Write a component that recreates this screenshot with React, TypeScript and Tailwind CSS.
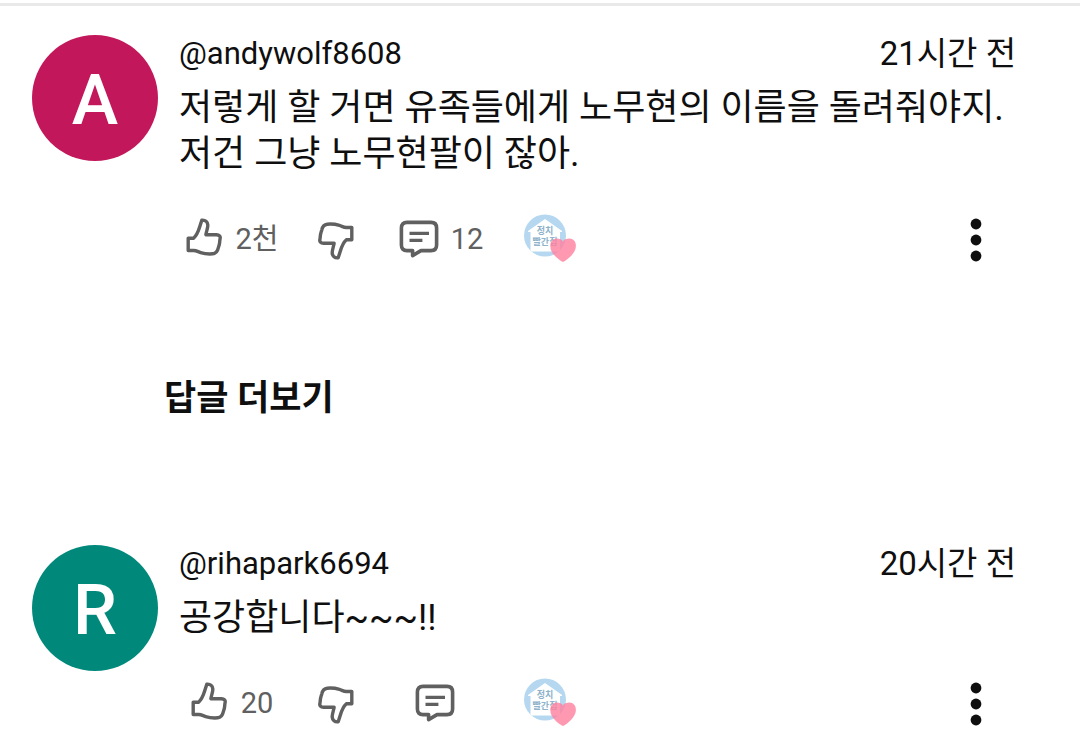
import type { ReactNode } from "react";
import clsx from "clsx";

type Comment = {
  handle: string;
  time: string;
  text: string;
  initial: string;
  avatarClass: string;
  likes: string;
  replies?: string;
};

const comments: Comment[] = [
  {
    handle: "@andywolf8608",
    time: "21시간 전",
    text: "저렇게 할 거면 유족들에게 노무현의 이름을 돌려줘야지. 저건 그냥 노무현팔이 잖아.",
    initial: "A",
    avatarClass: "bg-[#c2185b]",
    likes: "2천",
    replies: "12",
  },
  {
    handle: "@rihapark6694",
    time: "20시간 전",
    text: "공강합니다~~~!!",
    initial: "R",
    avatarClass: "bg-[#00897b]",
    likes: "20",
  },
];

function ThumbIcon({ className }: { className?: string }) {
  return (
    <svg
      viewBox="0 0 36 38"
      aria-hidden
      className={clsx("h-[38px] w-9 flex-none", className)}
      fill="none"
      stroke="currentColor"
      strokeWidth="3.4"
      strokeLinejoin="round"
    >
      <path d="M2.2 20.2H7.6C10.8 17.4 12.6 12.6 13.8 8.6L15.8 2.2C19.4 1.8 21.6 3.9 21.8 6.8C22 10 20.3 13.4 19.9 16.7H30.4C33.4 16.7 34.6 18.4 34.1 20.6C33.7 22.4 33.8 23.6 33.5 25.4C33.2 27.4 32.7 28.2 32.2 30.2C31.4 34 29.8 35.5 26.8 35.8C22.4 36.2 18.2 35.7 14.6 34.6C11.8 33.7 10.4 32.5 7.6 32.5H2.2Z" />
    </svg>
  );
}

function CommentIcon() {
  return (
    <svg
      viewBox="0 0 40 38"
      aria-hidden
      className="h-[38px] w-10 flex-none"
      fill="none"
      stroke="currentColor"
      strokeWidth="3.6"
      strokeLinejoin="round"
    >
      <path d="M8 2.4H32C35.8 2.4 37.6 4.2 37.6 8V25C37.6 28.8 35.8 30.6 32 30.6H22L13.6 35.6V30.6H8C4.2 30.6 2.4 28.8 2.4 25V8C2.4 4.2 4.2 2.4 8 2.4Z" />
      <path d="M10.5 13.4H30M10.5 20.4H23.4" strokeWidth="3.4" />
    </svg>
  );
}

function MoreIcon() {
  return (
    <svg viewBox="0 0 12 44" aria-hidden className="h-11 w-3 fill-current">
      <circle cx="6" cy="6" r="5.4" />
      <circle cx="6" cy="22" r="5.4" />
      <circle cx="6" cy="38" r="5.4" />
    </svg>
  );
}

function CreatorHeart() {
  return (
    <svg viewBox="0 0 54 50" role="img" aria-label="정치 빨간집" className="h-[50px] w-[54px]">
      <circle cx="22" cy="21.5" r="21" fill="#b5d8f0" />
      <path d="M22 5.5L39 17.5H36.5V37H8V17.5H5Z" fill="#fff" stroke="#fff" strokeLinejoin="round" />
      <g fill="#8fb3cb" fontFamily="Roboto, 'Noto Sans CJK KR', sans-serif" fontWeight="700" textAnchor="middle">
        <text x="22" y="20" fontSize="9">
          정치
        </text>
        <text x="22" y="31" fontSize="9">
          빨간집
        </text>
      </g>
      <path
        d="M40 48C36.5 46.4 27.5 40 27.3 32.4C27.1 27.8 30.1 24.6 33.9 24.6C36.5 24.6 38.9 25.4 40 27.4C41.1 25.4 43.5 24.6 46.3 24.6C50.3 24.6 53.1 27.8 52.9 32.2C52.7 39.6 43.5 46.4 40 48Z"
        fill="#ff7f9f"
        fillOpacity="0.8"
      />
    </svg>
  );
}

function Action({ label, className, children }: { label: string; className?: string; children: ReactNode }) {
  return (
    <button type="button" aria-label={label} className={clsx("flex items-center justify-center", className)}>
      {children}
    </button>
  );
}

function CommentItem({ handle, time, text, initial, avatarClass, likes, replies }: Comment) {
  return (
    <article className="flex gap-[21px] pr-16 pl-8">
      <div
        className={clsx(
          "flex size-[126px] flex-none items-center justify-center rounded-full pt-1 text-[70px] leading-none font-medium text-white",
          avatarClass,
        )}
      >
        {initial}
      </div>

      <div className="min-w-0 flex-1">
        <header className="flex items-center justify-between leading-[38px]">
          <a href="#channel" className="text-[31px]">
            {handle}
          </a>
          <time className="text-[33px]">{time}</time>
        </header>

        <p className="mt-3 text-[36px] leading-[46px]">{text}</p>

        <div className="mt-[38px] flex h-12 items-center text-[#606060]">
          <Action label="좋아요" className="w-[106px] gap-[14px]">
            <ThumbIcon className="mb-1" />
            <span className="text-[29px] leading-9">{likes}</span>
          </Action>
          <Action label="싫어요" className="w-[102px]">
            <ThumbIcon className="mt-1 rotate-180" />
          </Action>
          <Action label="답글" className="w-[108px] gap-3">
            <CommentIcon />
            <span className="text-[29px] leading-9">{replies}</span>
          </Action>
          <div className="ml-7">
            <CreatorHeart />
          </div>
          <Action label="더보기" className="mt-0.5 mr-8 ml-auto w-4 text-[#0f0f0f]">
            <MoreIcon />
          </Action>
        </div>
      </div>
    </article>
  );
}

export default function App() {
  return (
    <main className="bg-white font-[Roboto,'Noto_Sans_CJK_KR',sans-serif] text-[#0f0f0f]">
      <div className="pt-[3px]">
        <hr className="border-t-[3px] border-[#e9e9e9]" />
      </div>
      <div className="pt-[29px]">
        <CommentItem {...comments[0]} />
        <button type="button" className="mt-28 ml-[164px] block text-[35px] leading-[48px] font-bold">
          답글 더보기
        </button>
        <div className="mt-[122px]">
          <CommentItem {...comments[1]} />
        </div>
      </div>
    </main>
  );
}
